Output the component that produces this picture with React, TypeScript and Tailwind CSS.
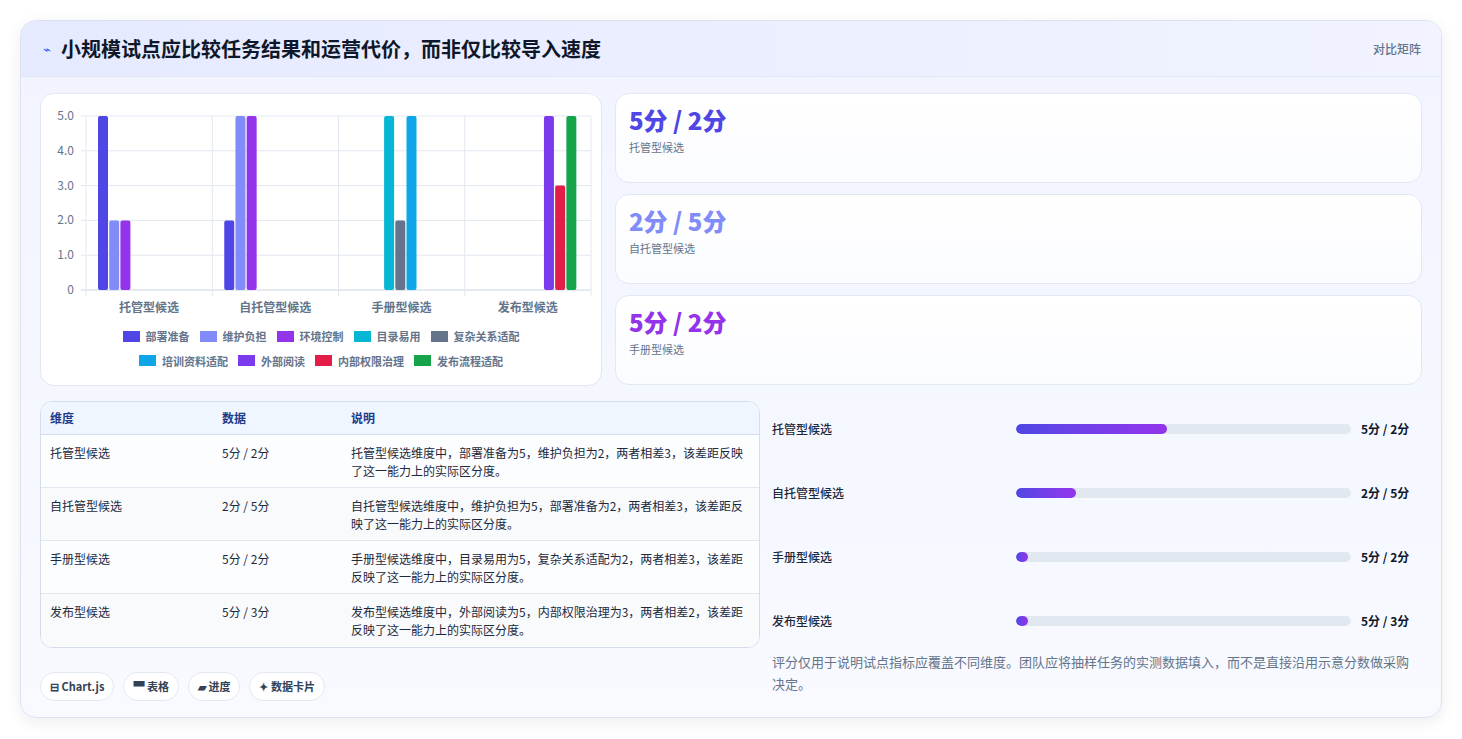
import React from "react";

const F = { fontFamily: '"Noto Sans CJK SC", "Noto Sans", sans-serif' };
const colors = ["#4f46e5", "#818cf8", "#9333ea", "#06b6d4", "#64748b", "#0ea5e9", "#7c3aed", "#e11d48", "#16a34a"];
const names = ["部署准备", "维护负担", "环境控制", "目录易用", "复杂关系适配", "培训资料适配", "外部阅读", "内部权限治理", "发布流程适配"];
const cats = ["托管型候选", "自托管型候选", "手册型候选", "发布型候选"];
const data: (number | null)[][] = [
  [5, 2, 2, null, null, null, null, null, null],
  [2, 5, 5, null, null, null, null, null, null],
  [null, null, null, 5, 2, 5, null, null, null],
  [null, null, null, null, null, null, 5, 3, 5],
];

function Chart() {
  const L = 45, R = 550, T = 22, B = 196;
  const cw = (R - L) / 4;
  const y = (v: number) => B - (v / 5) * (B - T);
  return (
    <svg width="560" height="226" viewBox="0 0 560 226" className="block">
      {[0, 1, 2, 3, 4, 5].map((v) => (
        <g key={v}>
          <line x1={L - 5} x2={R} y1={y(v)} y2={y(v)} stroke={v === 0 ? "#cbd5e1" : "#e2e8f0"} />
          <text x={L - 12} y={y(v) + 4} textAnchor="end" fontSize="12" fill="#64748b" style={F}>{v === 0 ? "0" : v.toFixed(1)}</text>
        </g>
      ))}
      {[0, 1, 2, 3, 4].map((i) => (
        <line key={i} x1={L + i * cw} x2={L + i * cw} y1={T} y2={B + 6} stroke="#e2e8f0" />
      ))}
      {data.map((row, c) =>
        row.map((v, d) =>
          v == null ? null : (
            <rect key={c + "-" + d} x={L + c * cw + 12 + d * 11.2} y={y(v)} width={10} height={B - y(v)} rx={2} fill={colors[d]} />
          )
        )
      )}
      {cats.map((c, i) => (
        <text key={c} x={L + (i + 0.5) * cw} y={B + 22} textAnchor="middle" fontSize="12" fontWeight="600" fill="#64748b" style={F}>{c}</text>
      ))}
    </svg>
  );
}

function Legend({ idx }: { idx: number[] }) {
  return (
    <div className="flex justify-center gap-[10px]">
      {idx.map((i) => (
        <div key={i} className="flex items-center gap-[6px]">
          <span className="w-[17px] h-[11px] inline-block" style={{ background: colors[i] }} />
          <span className="text-[11px] font-semibold text-[#64748b]">{names[i]}</span>
        </div>
      ))}
    </div>
  );
}

const rows = [
  ["托管型候选", "5分 / 2分", "托管型候选维度中，部署准备为5，维护负担为2，两者相差3，该差距反映了这一能力上的实际区分度。"],
  ["自托管型候选", "2分 / 5分", "自托管型候选维度中，维护负担为5，部署准备为2，两者相差3，该差距反映了这一能力上的实际区分度。"],
  ["手册型候选", "5分 / 2分", "手册型候选维度中，目录易用为5，复杂关系适配为2，两者相差3，该差距反映了这一能力上的实际区分度。"],
  ["发布型候选", "5分 / 3分", "发布型候选维度中，外部阅读为5，内部权限治理为3，两者相差2，该差距反映了这一能力上的实际区分度。"],
];
const bars = [
  ["托管型候选", 45, "5分 / 2分"],
  ["自托管型候选", 18, "2分 / 5分"],
  ["手册型候选", 3.5, "5分 / 2分"],
  ["发布型候选", 3.5, "5分 / 3分"],
] as const;
const cards = [
  ["5分 / 2分", "托管型候选", "text-[#4f46e5]"],
  ["2分 / 5分", "自托管型候选", "text-[#818cf8]"],
  ["5分 / 2分", "手册型候选", "text-[#9333ea]"],
];

export default function App() {
  return (
    <div className="w-[1462px] h-[739px] bg-white pt-[20px] px-[20px]" style={F}>
      <div className="w-[1422px] h-[698px] rounded-[16px] border border-[#dbe3f3] shadow-[0_4px_16px_rgba(15,23,42,0.08)] bg-gradient-to-b from-[#f1f4ff] to-[#f8faff] overflow-hidden">
        <div className="h-[56px] flex items-center justify-between px-[20px] border-b border-[#e0e7f5] bg-gradient-to-r from-[#e6eaff] to-[#f1f3ff]">
          <div className="flex items-center gap-[10px]">
            <span className="text-[#2563eb] text-[13px] pl-[2px]">⌁</span>
            <span className="text-[20px] font-bold text-[#0f172a]">小规模试点应比较任务结果和运营代价，而非仅比较导入速度</span>
          </div>
          <span className="text-[12px] text-[#64748b] font-medium">对比矩阵</span>
        </div>
        <div className="px-[19px] pt-[16px]">
          <div className="flex gap-[13px]">
            <div className="w-[562px] h-[293px] bg-white rounded-[14px] border border-[#e2e8f0] overflow-hidden">
              <Chart />
              <div className="flex flex-col gap-[8px] mt-[8px]">
                <Legend idx={[0, 1, 2, 3, 4]} />
                <Legend idx={[5, 6, 7, 8]} />
              </div>
            </div>
            <div className="flex-1 flex flex-col gap-[11px]">
              {cards.map(([v, l, c]) => (
                <div key={l} className="h-[90px] rounded-[14px] border border-[#e2e8f0] bg-gradient-to-b from-white to-[#fbfcff] px-[13px] pt-[10px]">
                  <div className={"text-[24px] font-extrabold leading-[32px] " + c}>{v}</div>
                  <div className="text-[11px] text-[#64748b] mt-[3px]">{l}</div>
                </div>
              ))}
            </div>
          </div>
          <div className="flex gap-[12px] mt-[15px]">
            <div className="w-[720px]">
              <div className="rounded-[12px] border border-[#d5dde9] overflow-hidden bg-white">
                <div className="flex h-[33px] items-center bg-[#eff6ff] border-b border-[#d5dde9] text-[12px] font-bold text-[#1e3a8a]">
                  <div className="w-[181px] pl-[9px]">维度</div>
                  <div className="w-[129px]">数据</div>
                  <div className="flex-1">说明</div>
                </div>
                {rows.map((r, i) => (
                  <div key={i} className={"flex h-[53px] pt-[9px] text-[12px] text-[#1e293b] leading-[18px] " + (i < 3 ? "border-b border-[#e2e8f0] " : "") + (i % 2 ? "bg-[#f8fafc]" : "bg-[#fcfdff]")}>
                    <div className="w-[181px] pl-[9px]">{r[0]}</div>
                    <div className="w-[129px]">{r[1]}</div>
                    <div className="flex-1 pr-[10px]">{r[2]}</div>
                  </div>
                ))}
              </div>
              <div className="flex gap-[9px] mt-[24px]">
                {["⊟ Chart.js", "▀ 表格", "▰ 进度", "✦ 数据卡片"].map((t) => (
                  <span key={t} className="h-[29px] px-[9px] flex items-center rounded-full border border-[#e2e8f0] bg-white text-[11px] font-semibold text-[#334155]">{t}</span>
                ))}
              </div>
            </div>
            <div className="flex-1 pl-0 pr-[2px]">
              {bars.map(([l, w, v]) => (
                <div key={l} className="h-[64px] flex items-start pt-[19px]">
                  <div className="w-[244px] text-[12px] text-[#1e293b] font-medium">{l}</div>
                  <div className="w-[335px] h-[10px] mt-[4px] rounded-full bg-[#e2e8f0] overflow-hidden">
                    <div className="h-full rounded-full bg-gradient-to-r from-[#4f46e5] to-[#9333ea]" style={{ width: w + "%" }} />
                  </div>
                  <div className="ml-[10px] text-[12px] font-bold text-[#0f172a]">{v}</div>
                </div>
              ))}
              <div className="text-[13px] text-[#64748b] leading-[22px] mt-[-6px]">评分仅用于说明试点指标应覆盖不同维度。团队应将抽样任务的实测数据填入，而不是直接沿用示意分数做采购决定。</div>
            </div>
          </div>
        </div>
      </div>
    </div>
  );
}
